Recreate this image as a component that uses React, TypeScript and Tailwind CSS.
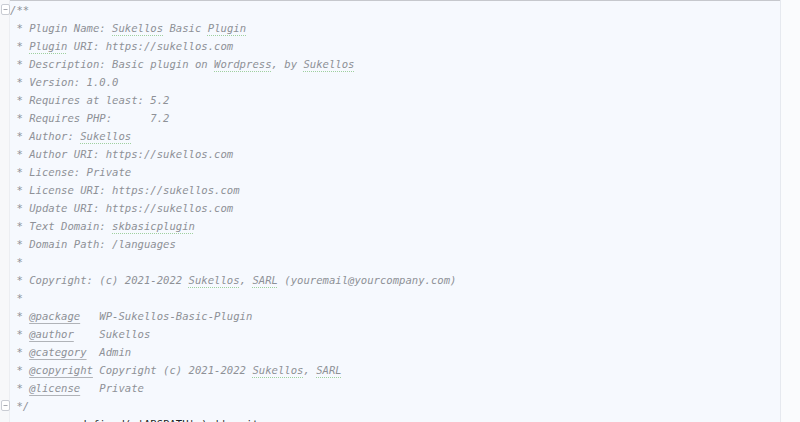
import React from 'react';

type Seg = { t: string; k?: 'typo' | 'tag' };

// comment block lines, split where the editor draws underlines
const lines: Seg[][] = [
  [{ t: '/**' }],
  [{ t: ' * Plugin Name: ' }, { t: 'Sukellos', k: 'typo' }, { t: ' Basic ' }, { t: 'Plugin', k: 'typo' }],
  [{ t: ' * ' }, { t: 'Plugin', k: 'typo' }, { t: ' URI: https://sukellos.com' }],
  [{ t: ' * Description: Basic plugin on ' }, { t: 'Wordpress', k: 'typo' }, { t: ', by ' }, { t: 'Sukellos', k: 'typo' }],
  [{ t: ' * Version: 1.0.0' }],
  [{ t: ' * Requires at least: 5.2' }],
  [{ t: ' * Requires PHP:      7.2' }],
  [{ t: ' * Author: ' }, { t: 'Sukellos', k: 'typo' }],
  [{ t: ' * Author URI: https://sukellos.com' }],
  [{ t: ' * License: Private' }],
  [{ t: ' * License URI: https://sukellos.com' }],
  [{ t: ' * Update URI: https://sukellos.com' }],
  [{ t: ' * Text Domain: ' }, { t: 'skbasicplugin', k: 'typo' }],
  [{ t: ' * Domain Path: /languages' }],
  [{ t: ' *' }],
  [{ t: ' * Copyright: (c) 2021-2022 ' }, { t: 'Sukellos', k: 'typo' }, { t: ', ' }, { t: 'SARL', k: 'typo' }, { t: ' (youremail@yourcompany.com)' }],
  [{ t: ' *' }],
  [{ t: ' * ' }, { t: '@package', k: 'tag' }, { t: '   WP-Sukellos-Basic-Plugin' }],
  [{ t: ' * ' }, { t: '@author', k: 'tag' }, { t: '    Sukellos' }],
  [{ t: ' * ' }, { t: '@category', k: 'tag' }, { t: '  Admin' }],
  [{ t: ' * ' }, { t: '@copyright', k: 'tag' }, { t: ' Copyright (c) 2021-2022 ' }, { t: 'Sukellos', k: 'typo' }, { t: ', ' }, { t: 'SARL', k: 'typo' }],
  [{ t: ' * ' }, { t: '@license', k: 'tag' }, { t: '   Private' }],
  [{ t: ' */' }],
];

const FoldMarker = () => (
  <svg width="9" height="11" viewBox="0 0 9 11" className="block">
    <rect x="0.5" y="0.5" width="8" height="10" rx="1.5" fill="#ffffff" stroke="#c9ccd3" />
    <line x1="2.5" y1="5.5" x2="6.5" y2="5.5" stroke="#a6a9b0" />
  </svg>
);

export default function App() {
  return (
    <div
      className="w-[800px] h-[422px] overflow-hidden flex bg-[#f7f9fd]"
      style={{ fontFamily: '"DejaVu Sans Mono", "Liberation Mono", monospace' }}
    >
      {/* gutter with fold markers */}
      <div className="w-[10px] shrink-0 bg-[#f7f8fa] border-r border-[#eceef2] flex flex-col pt-[4px]">
        <div className="pl-[1px]">
          <FoldMarker />
        </div>
        <div className="pl-[1px] mt-[385px]">
          <FoldMarker />
        </div>
      </div>

      {/* editor area */}
      <div className="w-[770px] shrink-0 border-t border-[#c6c8cd] bg-[#f6f9fe]">
        <div className="text-[10.6px] leading-[18px] text-[#8e9197] italic">
          {lines.map((segs, i) => (
            <div key={i} className="h-[18px] whitespace-pre">
              {segs.map((s, j) =>
                s.k === 'typo' ? (
                  <span
                    key={j}
                    className="underline decoration-dotted decoration-[#9fd09f] decoration-1 underline-offset-[3px]"
                  >
                    {s.t}
                  </span>
                ) : s.k === 'tag' ? (
                  <span key={j} className="underline decoration-[#b0b3b8] underline-offset-[3px]">
                    {s.t}
                  </span>
                ) : (
                  <span key={j}>{s.t}</span>
                )
              )}
            </div>
          ))}
          <div className="h-[18px] whitespace-pre not-italic text-[#1b1d22]">
            {'           defined( \'ABSPATH\' ) || exit;'}
          </div>
        </div>
      </div>

      {/* right margin */}
      <div className="flex-1 border-l border-[#e6e9ef] bg-[#fafbfd]" />
    </div>
  );
}
